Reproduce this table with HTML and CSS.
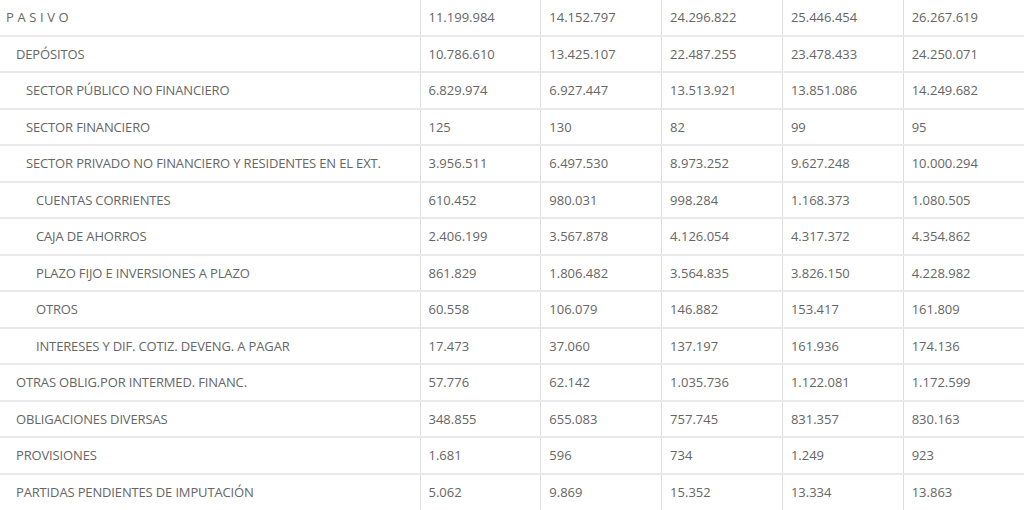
FILE: index.html
```html
<!DOCTYPE html>
<html lang="es">
<head>
<meta charset="utf-8">
<title>Pasivo</title>
<link rel="stylesheet" href="styles.css">
</head>
<body>
<table class="tbl">
  <colgroup>
    <col class="c-label"><col class="c-num"><col class="c-num"><col class="c-num"><col class="c-num"><col class="c-num">
  </colgroup>
  <tbody>
    <tr><td class="l0 spaced">PASIVO</td><td>11.199.984</td><td>14.152.797</td><td>24.296.822</td><td>25.446.454</td><td>26.267.619</td></tr>
    <tr><td class="l1">DEPÓSITOS</td><td>10.786.610</td><td>13.425.107</td><td>22.487.255</td><td>23.478.433</td><td>24.250.071</td></tr>
    <tr><td class="l2">SECTOR PÚBLICO NO FINANCIERO</td><td>6.829.974</td><td>6.927.447</td><td>13.513.921</td><td>13.851.086</td><td>14.249.682</td></tr>
    <tr><td class="l2">SECTOR FINANCIERO</td><td>125</td><td>130</td><td>82</td><td>99</td><td>95</td></tr>
    <tr><td class="l2">SECTOR PRIVADO NO FINANCIERO Y RESIDENTES EN EL EXT.</td><td>3.956.511</td><td>6.497.530</td><td>8.973.252</td><td>9.627.248</td><td>10.000.294</td></tr>
    <tr><td class="l3">CUENTAS CORRIENTES</td><td>610.452</td><td>980.031</td><td>998.284</td><td>1.168.373</td><td>1.080.505</td></tr>
    <tr><td class="l3">CAJA DE AHORROS</td><td>2.406.199</td><td>3.567.878</td><td>4.126.054</td><td>4.317.372</td><td>4.354.862</td></tr>
    <tr><td class="l3">PLAZO FIJO E INVERSIONES A PLAZO</td><td>861.829</td><td>1.806.482</td><td>3.564.835</td><td>3.826.150</td><td>4.228.982</td></tr>
    <tr><td class="l3">OTROS</td><td>60.558</td><td>106.079</td><td>146.882</td><td>153.417</td><td>161.809</td></tr>
    <tr><td class="l3">INTERESES Y DIF. COTIZ. DEVENG. A PAGAR</td><td>17.473</td><td>37.060</td><td>137.197</td><td>161.936</td><td>174.136</td></tr>
    <tr><td class="l1">OTRAS OBLIG.POR INTERMED. FINANC.</td><td>57.776</td><td>62.142</td><td>1.035.736</td><td>1.122.081</td><td>1.172.599</td></tr>
    <tr><td class="l1">OBLIGACIONES DIVERSAS</td><td>348.855</td><td>655.083</td><td>757.745</td><td>831.357</td><td>830.163</td></tr>
    <tr><td class="l1">PROVISIONES</td><td>1.681</td><td>596</td><td>734</td><td>1.249</td><td>923</td></tr>
    <tr><td class="l1">PARTIDAS PENDIENTES DE IMPUTACIÓN</td><td>5.062</td><td>9.869</td><td>15.352</td><td>13.334</td><td>13.863</td></tr>
  </tbody>
</table>
</body>
</html>
```
FILE: styles.css
```css
html, body {
  margin: 0;
  padding: 0;
  background: #ffffff;
}
body {
  font-family: "Open Sans", "Liberation Sans", sans-serif;
  font-size: 13px;
  color: #666666;
}
.tbl {
  width: 1024px;
  margin-top: -1px;
  border-collapse: collapse;
  table-layout: fixed;
}
.c-label { width: 420px; }
.c-num { width: 120.8px; }
.tbl td {
  height: 36.5px;
  padding: 0 8px;
  border-bottom: 2px solid #e9e9e9;
  border-left: 1px solid #dddddd;
  vertical-align: middle;
  white-space: nowrap;
  box-sizing: border-box;
}
.tbl td:first-child {
  border-left: none;
  letter-spacing: -0.15px;
}
.tbl tr:last-child td { border-bottom: none; }
.l0 { padding-left: 6px !important; }
.l1 { padding-left: 16px !important; }
.l2 { padding-left: 26px !important; }
.l3 { padding-left: 36px !important; }
.tbl td.spaced { letter-spacing: 3.6px; }
```
